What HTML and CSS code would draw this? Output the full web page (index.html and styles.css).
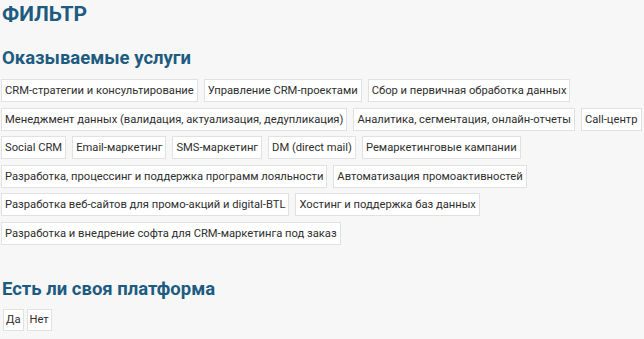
FILE: index.html
```html
<!DOCTYPE html>
<html lang="ru">
<head>
    <meta charset="UTF-8">
    <title>Фильтр</title>
    <link rel="stylesheet" href="styles.css">
</head>
<body>
    <div class="filter">
        <h1>ФИЛЬТР</h1>

        <h2>Оказываемые услуги</h2>
        <div class="tags">
            <span class="tag">CRM-стратегии и консультирование</span>
            <span class="tag">Управление CRM-проектами</span>
            <span class="tag">Сбор и первичная обработка данных</span>
            <span class="tag">Менеджмент данных (валидация, актуализация, дедупликация)</span>
            <span class="tag">Аналитика, сегментация, онлайн-отчеты</span>
            <span class="tag">Call-центр</span>
            <span class="tag">Social CRM</span>
            <span class="tag">Email-маркетинг</span>
            <span class="tag">SMS-маркетинг</span>
            <span class="tag">DM (direct mail)</span>
            <span class="tag">Ремаркетинговые кампании</span>
            <span class="tag">Разработка, процессинг и поддержка программ лояльности</span>
            <span class="tag">Автоматизация промоактивностей</span>
            <span class="tag">Разработка веб-сайтов для промо-акций и digital-BTL</span>
            <span class="tag">Хостинг и поддержка баз данных</span>
            <span class="tag">Разработка и внедрение софта для CRM-маркетинга под заказ</span>
        </div>

        <h2 class="second">Есть ли своя платформа</h2>
        <div class="tags tags-small">
            <span class="tag">Да</span>
            <span class="tag">Нет</span>
        </div>
    </div>
</body>
</html>
```

FILE: styles.css
```css
body {
    margin: 0;
    padding: 0;
    background-color: #f7f7f7;
    font-family: Roboto, "Liberation Sans", sans-serif;
    color: #2e2e2e;
}

.filter {
    padding: 0 1px;
}

h1 {
    margin: 0;
    padding: 1px 0 0 1px;
    font-size: 21px;
    line-height: 26px;
    font-weight: 700;
    color: #1d5b80;
}

h2 {
    margin: 20px 0 10px 1px;
    font-size: 18.5px;
    line-height: 22px;
    font-weight: 700;
    color: #1d5b80;
}

h2.second {
    margin-top: 33px;
    margin-bottom: 9px;
}

.tags {
    display: flex;
    flex-wrap: wrap;
    gap: 5.5px 6px;
}

.tag {
    padding: 3px 3px;
    font-size: 11.2px;
    line-height: 15px;
    background-color: #fff;
    border: 1px solid #e1e1e1;
}

.tags-small {
    gap: 3px;
    margin-left: 2px;
}

.tags-small .tag {
    padding: 2px 2px 3px;
}
```
